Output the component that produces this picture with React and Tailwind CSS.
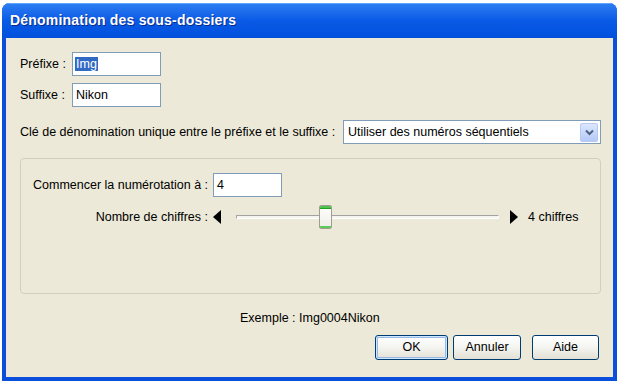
import React from "react";

const F = { fontFamily: '"Liberation Sans", Arial, sans-serif' };

export default function App() {
  return (
    <div className="w-[618px] h-[381px] bg-white overflow-hidden" style={F}>
      <div className="ml-[2px] mt-[3px] w-[615px] h-[378px] rounded-t-[8px] overflow-hidden flex flex-col bg-[#0A4FDB]">
        {/* title bar */}
        <div className="h-[35px] shrink-0 flex items-center pl-[8px] bg-gradient-to-b from-[#2E7EF2] via-[#0A5AE6] to-[#0050DC] shadow-[inset_0_1px_0_#5EA5FF]">
          <span className="text-white font-bold text-[14px] tracking-[0.2px] [text-shadow:1px_1px_0_#0A2A8A]">
            Dénomination des sous-dossiers
          </span>
        </div>
        {/* client */}
        <div className="flex-1 mx-[4px] mb-[4px] bg-[#ECE9D8] flex flex-col pl-[14px] pr-[12px] pt-[14px] text-[12.5px] text-black">
          <div className="flex items-center h-[24px]">
            <span className="w-[52px]">Préfixe :</span>
            <div className="w-[89px] h-[24px] bg-white border border-[#7F9DB9] flex items-center pl-[2px]">
              <span className="bg-[#316AC5] text-white leading-[14px] px-[1px]">Img</span>
            </div>
          </div>
          <div className="flex items-center h-[24px] mt-[7px]">
            <span className="w-[52px]">Suffixe :</span>
            <div className="w-[89px] h-[24px] bg-white border border-[#7F9DB9] flex items-center pl-[3px]">
              Nikon
            </div>
          </div>
          <div className="flex items-center h-[24px] mt-[13px]">
            <span className="w-[323px] whitespace-nowrap">Clé de dénomination unique entre le préfixe et le suffixe :</span>
            <div className="w-[258px] h-[24px] bg-white border border-[#7F9DB9] flex items-center pl-[4px] pr-[2px]">
              <span className="flex-1">Utiliser des numéros séquentiels</span>
              <div className="w-[18px] h-[19px] rounded-[2px] border border-[#B6C8F3] bg-gradient-to-b from-[#DCE7FE] to-[#B4C9F7] flex items-center justify-center">
                <svg width="9" height="7" viewBox="0 0 9 7">
                  <path d="M1 1.5 L4.5 5 L8 1.5" stroke="#4D6185" strokeWidth="2" fill="none" />
                </svg>
              </div>
            </div>
          </div>
          {/* group box */}
          <div className="mt-[14px] w-[581px] h-[136px] rounded-[4px] border border-[#D0D0BF] flex flex-col pl-[12px] pt-[14px]">
            <div className="flex items-center h-[24px]">
              <span className="w-[180px] whitespace-nowrap">Commencer la numérotation à :</span>
              <div className="w-[69px] h-[24px] bg-white border border-[#7F9DB9] flex items-center pl-[3px]">4</div>
            </div>
            <div className="flex items-center h-[26px] mt-[7px]">
              <span className="w-[180px] text-right pr-[5px] whitespace-nowrap">Nombre de chiffres :</span>
              <svg width="8" height="14" viewBox="0 0 8 14" className="shrink-0">
                <path d="M8 0 L0 7 L8 14 Z" fill="#000" />
              </svg>
              <div className="relative ml-[15px] w-[263px] h-[26px] flex items-center">
                <div className="w-full h-[4px] border-t border-l border-[#A3A3A3] bg-[#F4F4F0] border-b border-b-white border-r border-r-white rounded-[1px]" />
                <div className="absolute left-[83px] top-[1px] w-[13px] h-[24px] rounded-[2px] border border-[#9E9E94] bg-gradient-to-b from-[#FFFFFF] to-[#EEEDE5] overflow-hidden">
                  <div className="h-[3px] bg-[#4FC14F] border-b border-[#21A121]" />
                  <div className="absolute bottom-0 left-0 right-0 h-[2px] bg-[#5CCB5C]" />
                </div>
              </div>
              <svg width="8" height="14" viewBox="0 0 8 14" className="ml-[11px] shrink-0">
                <path d="M0 0 L8 7 L0 14 Z" fill="#000" />
              </svg>
              <span className="ml-[10px]">4 chiffres</span>
            </div>
          </div>
          <div className="mt-[17px] h-[14px] flex items-center pl-[220px]">Exemple : Img0004Nikon</div>
          <div className="mt-[10px] flex justify-end pr-[2px]">
            <div className="w-[73px] h-[25px] rounded-[3px] border border-[#003C74] bg-gradient-to-b from-[#FFFFFF] via-[#F4F4F0] to-[#E3E0D4] flex items-center justify-center shadow-[inset_0_0_0_1px_#CEE7FF,inset_0_0_0_2px_#98B8EA]">OK</div>
            <div className="ml-[5px] w-[68px] h-[25px] rounded-[3px] border border-[#003C74] bg-gradient-to-b from-[#FFFFFF] via-[#F4F4F0] to-[#E3E0D4] flex items-center justify-center">Annuler</div>
            <div className="ml-[11px] w-[67px] h-[25px] rounded-[3px] border border-[#003C74] bg-gradient-to-b from-[#FFFFFF] via-[#F4F4F0] to-[#E3E0D4] flex items-center justify-center">Aide</div>
          </div>
        </div>
      </div>
    </div>
  );
}
